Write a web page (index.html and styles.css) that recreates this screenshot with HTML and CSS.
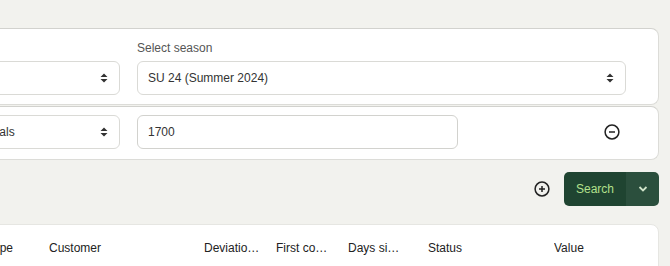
FILE: index.html
```html
<!DOCTYPE html>
<html lang="en">
<head>
  <meta charset="UTF-8">
  <title>Order search</title>
  <link rel="stylesheet" href="styles.css">
</head>
<body>
  <div class="page">
    <section class="filter-card">
      <div class="filter-row">
        <div class="field field-type">
          <label class="field-label">&nbsp;</label>
          <div class="select">
            <span class="select-value"></span>
            <svg class="select-arrows" width="8" height="10" viewBox="0 0 8 10"><path d="M4 0.5 L7.5 4 H0.5 Z M4 9.5 L7.5 6 H0.5 Z" fill="#333"/></svg>
          </div>
        </div>
        <div class="field field-season">
          <label class="field-label">Select season</label>
          <div class="select">
            <span class="select-value">SU 24 (Summer 2024)</span>
            <svg class="select-arrows" width="8" height="10" viewBox="0 0 8 10"><path d="M4 0.5 L7.5 4 H0.5 Z M4 9.5 L7.5 6 H0.5 Z" fill="#333"/></svg>
          </div>
        </div>
      </div>
    </section>

    <section class="filter-card condition-card">
      <div class="select field-type">
        <span class="select-value">Individuals</span>
        <svg class="select-arrows" width="8" height="10" viewBox="0 0 8 10"><path d="M4 0.5 L7.5 4 H0.5 Z M4 9.5 L7.5 6 H0.5 Z" fill="#333"/></svg>
      </div>
      <div class="text-input">1700</div>
      <button class="icon-btn remove-btn" title="Remove">
        <svg width="16" height="16" viewBox="0 0 16 16"><circle cx="8" cy="8" r="6.9" fill="none" stroke="#222" stroke-width="1.5"/><path d="M5 8 H11" stroke="#222" stroke-width="1.5"/></svg>
      </button>
    </section>

    <div class="actions">
      <button class="icon-btn" title="Add condition">
        <svg width="16" height="16" viewBox="0 0 16 16"><circle cx="8" cy="8" r="6.9" fill="none" stroke="#222" stroke-width="1.5"/><path d="M5 8 H11 M8 5 V11" stroke="#222" stroke-width="1.5"/></svg>
      </button>
      <div class="split-btn">
        <button class="split-main">Search</button>
        <button class="split-toggle">
          <svg width="10" height="6" viewBox="0 0 10 6"><path d="M1.5 1 L5 4.5 L8.5 1" fill="none" stroke="#cfe3c9" stroke-width="1.8"/></svg>
        </button>
      </div>
    </div>

    <section class="table-card">
      <div class="table-head">
        <span class="col col-check"></span>
        <span class="col">Type</span>
        <span class="col">Customer</span>
        <span class="col trunc">Deviation days</span>
        <span class="col trunc">First contact</span>
        <span class="col trunc">Days since</span>
        <span class="col">Status</span>
        <span class="col">Value</span>
      </div>
    </section>
  </div>
</body>
</html>
```

FILE: styles.css
```css
body {
  margin: 0;
  background: #f2f2ee;
  font-family: "Liberation Sans", Arial, sans-serif;
  font-size: 12px;
  color: #333;
  overflow: hidden;
}
.page {
  margin-left: -70px;
  width: 729px;
  padding-top: 28px;
}
.filter-card {
  background: #fff;
  border: 1px solid #dcdcd8;
  border-top-color: #d2d2ce;
  border-radius: 8px;
  padding: 12px 32px 9px 16px;
}
.filter-row {
  display: flex;
  gap: 17px;
}
.field-type {
  width: 173px;
  flex: none;
  box-sizing: border-box;
}
.field-season {
  flex: 1;
}
.field-label {
  display: block;
  line-height: 14px;
  margin-bottom: 6px;
  color: #555;
}
.select, .text-input {
  height: 34px;
  box-sizing: border-box;
  border: 1px solid #dadad6;
  border-radius: 6px;
  background: #fff;
  display: flex;
  align-items: center;
  padding: 0 10px;
  color: #333;
}
.select-value {
  flex: 1;
}
.select-arrows {
  flex: none;
  margin-right: 1px;
}
.condition-card {
  margin-top: 1px;
  padding: 8px 38px 10px 16px;
  display: flex;
  align-items: center;
  gap: 17px;
}
.text-input {
  width: 321px;
  border-color: #d2d2ce;
}
.icon-btn {
  border: none;
  background: none;
  padding: 0;
  width: 16px;
  height: 16px;
  display: flex;
  cursor: pointer;
}
.remove-btn {
  margin-left: auto;
}
.actions {
  display: flex;
  justify-content: flex-end;
  align-items: center;
  gap: 14px;
  margin: 12px 0 18px;
}
.split-btn {
  display: flex;
  height: 34px;
  border-radius: 5px;
  overflow: hidden;
}
.split-btn button {
  border: none;
  font-family: inherit;
  cursor: pointer;
}
.split-main {
  background: #1f4431;
  color: #b3e08c;
  font-size: 12px;
  padding: 0 12px;
  width: 62px;
}
.split-toggle {
  background: #2b4f3d;
  width: 33px;
  display: flex;
  align-items: center;
  justify-content: center;
}
.table-card {
  background: #fff;
  border: 1px solid #e6e6e2;
  border-radius: 8px 8px 0 0;
  height: 60px;
}
.table-head {
  display: grid;
  grid-template-columns: 56px 62px 155px 72px 72px 80px 126px 1fr;
  padding-top: 16px;
  line-height: 14px;
  color: #222;
}
.col {
  padding-right: 12px;
  white-space: nowrap;
  overflow: hidden;
  text-overflow: ellipsis;
}
.col.trunc {
  justify-self: start;
  max-width: 56px;
  padding-right: 0;
}
```
